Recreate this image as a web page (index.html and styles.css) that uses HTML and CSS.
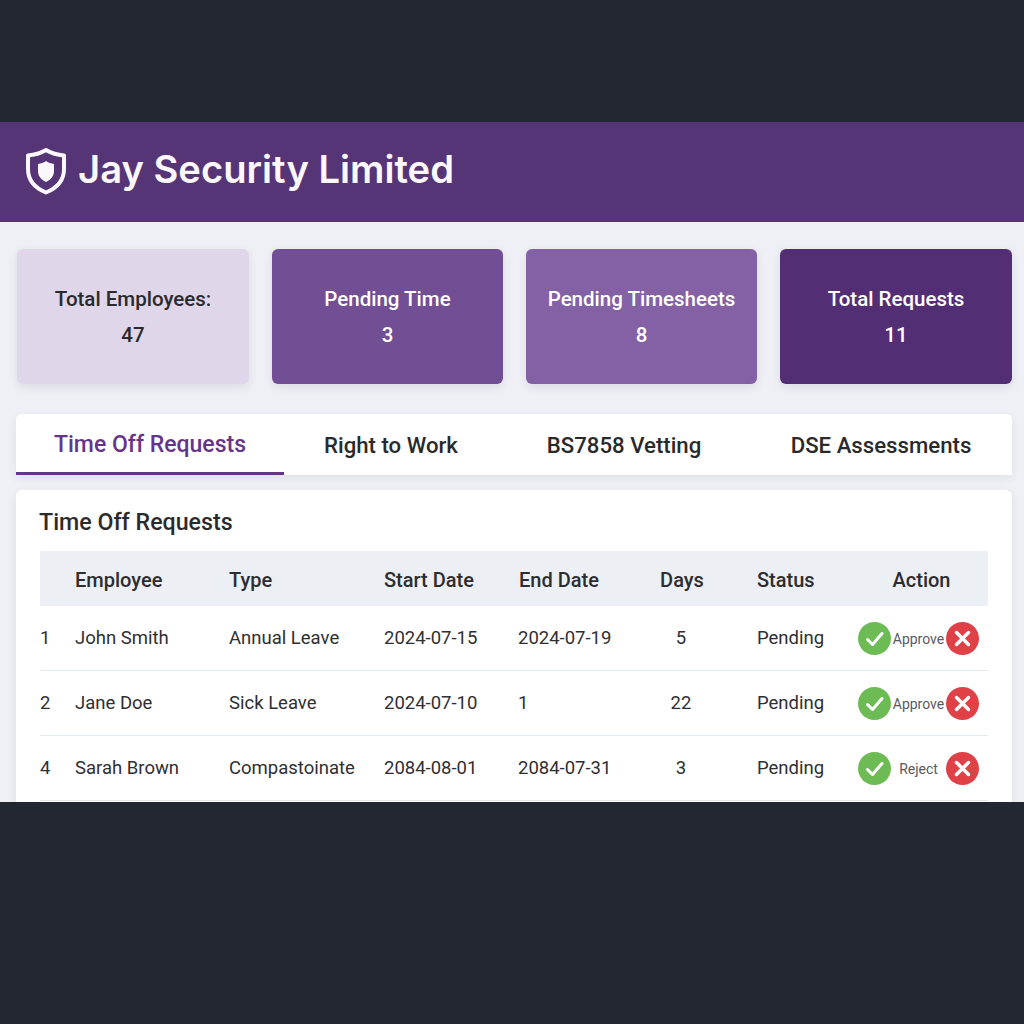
FILE: index.html
```html
<!DOCTYPE html>
<html lang="en">
<head>
<meta charset="utf-8">
<title>Jay Security Limited</title>
<link rel="stylesheet" href="styles.css">
</head>
<body>
<div class="app">
  <header class="brand">
    <svg class="shield" viewBox="0 0 42 48" aria-hidden="true">
      <path class="shield-outline" d="M21 3 C27 6.5 33 8 39 8.5 V22 C39 33 32 41 21 45.5 C10 41 3 33 3 22 V8.5 C9 8 15 6.5 21 3 Z"/>
      <path class="shield-core" d="M21 14 C23.5 15.8 26 16.6 29 17 V24 C29 29 26 32.5 21 35 C16 32.5 13 29 13 24 V17 C16 16.6 18.5 15.8 21 14 Z"/>
    </svg>
    <h1 class="brand-name">Jay Security Limited</h1>
  </header>
  <main class="content">
    <section class="stats">
      <div class="stat stat-light"><div class="stat-label">Total Employees:</div><div class="stat-value">47</div></div>
      <div class="stat stat-mid"><div class="stat-label">Pending Time</div><div class="stat-value">3</div></div>
      <div class="stat stat-soft"><div class="stat-label">Pending Timesheets</div><div class="stat-value">8</div></div>
      <div class="stat stat-deep"><div class="stat-label">Total Requests</div><div class="stat-value">11</div></div>
    </section>
    <nav class="tabs">
      <div class="tab tab-active">Time Off Requests</div>
      <div class="tab">Right to Work</div>
      <div class="tab">BS7858 Vetting</div>
      <div class="tab">DSE Assessments</div>
    </nav>
    <section class="panel">
      <h2 class="panel-title">Time Off Requests</h2>
      <table class="grid">
        <colgroup>
          <col class="c-num"><col class="c-emp"><col class="c-type"><col class="c-start"><col class="c-end"><col class="c-days"><col class="c-status"><col class="c-action">
        </colgroup>
        <thead>
          <tr><th></th><th>Employee</th><th>Type</th><th>Start Date</th><th class="end-head">End Date</th><th class="days">Days</th><th>Status</th><th class="action-head">Action</th></tr>
        </thead>
        <tbody>
          <tr>
            <td>1</td><td>John Smith</td><td>Annual Leave</td><td>2024-07-15</td><td>2024-07-19</td><td class="days">5</td><td>Pending</td>
            <td><div class="actions">
              <svg class="ico ok" viewBox="0 0 33 33" aria-hidden="true"><path d="M9.5 17.5 L14.5 22.5 L24 11.5"/></svg>
              <span class="act-label">Approve</span>
              <svg class="ico no" viewBox="0 0 33 33" aria-hidden="true"><path d="M10.5 10.5 L22.5 22.5 M22.5 10.5 L10.5 22.5"/></svg>
            </div></td>
          </tr>
          <tr>
            <td>2</td><td>Jane Doe</td><td>Sick Leave</td><td>2024-07-10</td><td>1</td><td class="days">22</td><td>Pending</td>
            <td><div class="actions">
              <svg class="ico ok" viewBox="0 0 33 33" aria-hidden="true"><path d="M9.5 17.5 L14.5 22.5 L24 11.5"/></svg>
              <span class="act-label">Approve</span>
              <svg class="ico no" viewBox="0 0 33 33" aria-hidden="true"><path d="M10.5 10.5 L22.5 22.5 M22.5 10.5 L10.5 22.5"/></svg>
            </div></td>
          </tr>
          <tr>
            <td>4</td><td>Sarah Brown</td><td>Compastoinate</td><td>2084-08-01</td><td>2084-07-31</td><td class="days">3</td><td>Pending</td>
            <td><div class="actions">
              <svg class="ico ok" viewBox="0 0 33 33" aria-hidden="true"><path d="M9.5 17.5 L14.5 22.5 L24 11.5"/></svg>
              <span class="act-label">Reject</span>
              <svg class="ico no" viewBox="0 0 33 33" aria-hidden="true"><path d="M10.5 10.5 L22.5 22.5 M22.5 10.5 L10.5 22.5"/></svg>
            </div></td>
          </tr>
        </tbody>
      </table>
    </section>
  </main>
</div>
</body>
</html>
```
FILE: styles.css
```css
* { box-sizing: border-box; }
html, body { margin: 0; height: 100%; }
body {
  background: #23272f;
  font-family: Roboto, "Liberation Sans", sans-serif;
  padding-top: 122px;
  overflow: hidden;
  color: #2a2a2c;
}
.app {
  height: 680px;
  overflow: hidden;
  background: #eef0f5;
  display: flex;
  flex-direction: column;
}
.brand {
  height: 100px;
  flex: none;
  background: #563577;
  display: flex;
  align-items: center;
  gap: 11px;
  padding-left: 25px;
}
.shield { width: 42px; height: 48px; flex: none; margin-bottom: 2px; }
.shield-outline { fill: none; stroke: #fbf8fd; stroke-width: 4; stroke-linejoin: round; }
.shield-core { fill: #fbf8fd; }
.brand-name {
  margin: 0 0 7px;
  font-family: Inter, Roboto, sans-serif;
  font-size: 38.2px;
  font-weight: 600;
  color: #fbf8fd;
}
.content { padding: 27px 12px 0 16px; }
.stats {
  display: grid;
  grid-template-columns: 232px 231px 231px 232px;
  column-gap: 23px;
  padding-left: 1px;
}
.stat {
  height: 135px;
  border-radius: 6px;
  display: flex;
  flex-direction: column;
  align-items: center;
  justify-content: center;
  gap: 12px;
  box-shadow: 0 3px 10px rgba(60, 50, 90, 0.1);
  color: #fff;
  font-size: 20.5px;
  font-weight: 500;
  line-height: 24px;
}
.stat-light { background: #dfd6ea; color: #2a2a2e; }
.stat-mid { background: #724f95; }
.stat-soft { background: #8460a5; }
.stat-deep { background: #532e75; }
.tabs {
  margin-top: 30px;
  height: 61px;
  background: #fff;
  border-radius: 6px 6px 0 0;
  display: grid;
  grid-template-columns: 268px 214px 252px 262px;
  box-shadow: 0 3px 10px rgba(60, 50, 90, 0.08);
}
.tab {
  display: flex;
  align-items: center;
  justify-content: center;
  font-size: 22.2px;
  font-weight: 500;
  color: #2a2a2c;
  padding-top: 1px;
}
.tab-active {
  font-size: 23px;
  color: #66358a;
  border-bottom: 3px solid #66358a;
  padding-top: 3px;
}
.panel {
  margin-top: 15px;
  height: 330px;
  background: #fff;
  border-radius: 6px 6px 0 0;
  padding: 0 24px;
  box-shadow: 0 3px 10px rgba(60, 50, 90, 0.08);
}
.panel-title {
  margin: 0 0 0 -1px;
  height: 61px;
  display: flex;
  align-items: center;
  padding-top: 3px;
  font-size: 23.2px;
  font-weight: 500;
  color: #2b2b2d;
}
.grid {
  width: 948px;
  table-layout: fixed;
  border-collapse: collapse;
}
.c-num { width: 35px; }
.c-emp { width: 154px; }
.c-type { width: 155px; }
.c-start { width: 134px; }
.c-end { width: 134px; }
.c-days { width: 105px; }
.c-status { width: 100px; }
.c-action { width: 131px; }
.grid th {
  height: 55px;
  background: #eceff4;
  text-align: left;
  font-size: 20px;
  font-weight: 500;
  padding: 2px 0 0;
  color: #2d2d30;
}
.grid td {
  height: 65px;
  padding: 0;
  font-size: 18.5px;
  color: #2f2f32;
  border-bottom: 1px solid #e4e9f0;
}
.grid tbody tr:first-child td { height: 64px; }
.grid .days { text-align: center; padding-right: 45px; }
.grid td.days { padding-right: 47px; }
.grid .end-head { padding-left: 1px; }
.grid .action-head { text-align: center; padding-right: 2px; }
.actions {
  display: flex;
  align-items: center;
  justify-content: space-between;
  width: 121px;
  margin: 2px 0 0 1px;
}
.ico { width: 33px; height: 33px; border-radius: 50%; flex: none; }
.ico path { fill: none; stroke: #fff; stroke-linecap: round; stroke-linejoin: round; }
.ok { background: #6cbb54; }
.ok path { stroke-width: 3; }
.no { background: #e04146; }
.no path { stroke-width: 3.5; }
.act-label { font-size: 14px; color: #5a5a5e; }
```
